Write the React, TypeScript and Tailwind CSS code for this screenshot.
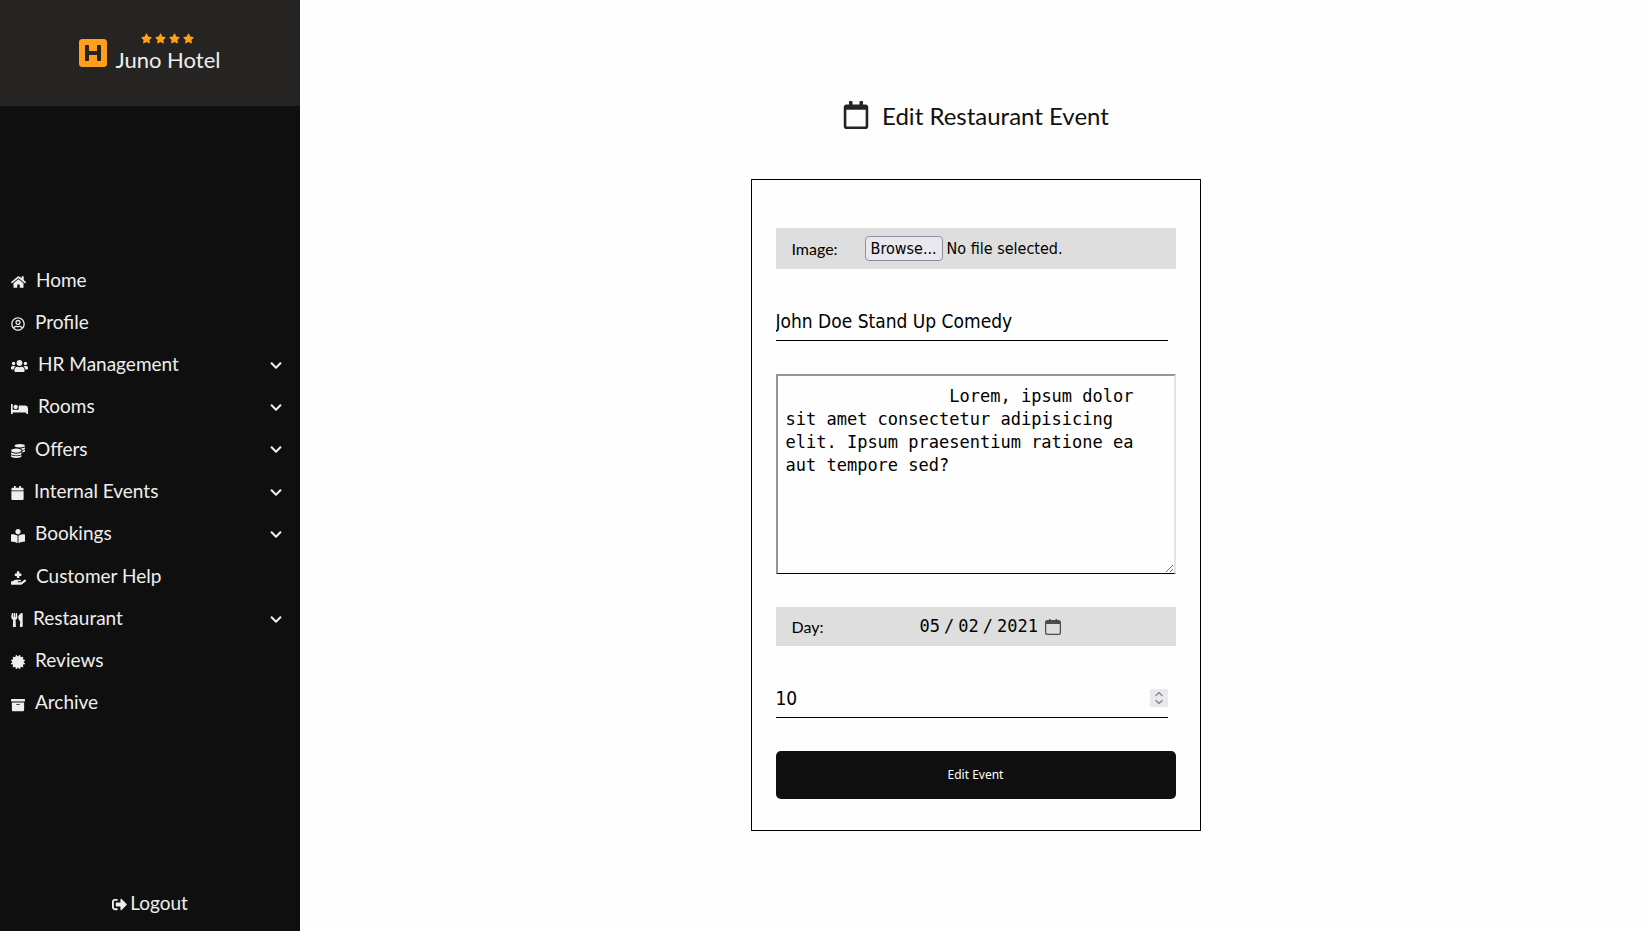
import type { ReactNode } from 'react';
import type { IconType } from 'react-icons';
import {
  FaArchive,
  FaBed,
  FaBookReader,
  FaCalendar,
  FaCertificate,
  FaChevronDown,
  FaCoins,
  FaHandHoldingMedical,
  FaHome,
  FaHSquare,
  FaRegCalendar,
  FaRegUserCircle,
  FaSignOutAlt,
  FaStar,
  FaUsers,
  FaUtensils,
} from 'react-icons/fa';

type NavItem = { label: string; icon: IconType; width: string; expandable?: boolean };

const navItems: NavItem[] = [
  { label: 'Home', icon: FaHome, width: 'w-[15px]' },
  { label: 'Profile', icon: FaRegUserCircle, width: 'w-[14px]' },
  { label: 'HR Management', icon: FaUsers, width: 'w-[17px]', expandable: true },
  { label: 'Rooms', icon: FaBed, width: 'w-[17px]', expandable: true },
  { label: 'Offers', icon: FaCoins, width: 'w-[14px]', expandable: true },
  { label: 'Internal Events', icon: FaCalendar, width: 'w-[13px]', expandable: true },
  { label: 'Bookings', icon: FaBookReader, width: 'w-[14px]', expandable: true },
  { label: 'Customer Help', icon: FaHandHoldingMedical, width: 'w-[15px]' },
  { label: 'Restaurant', icon: FaUtensils, width: 'w-[12px]', expandable: true },
  { label: 'Reviews', icon: FaCertificate, width: 'w-[14px]' },
  { label: 'Archive', icon: FaArchive, width: 'w-[14px]' },
];

function Sidebar() {
  return (
    <aside className="flex w-[300px] shrink-0 flex-col bg-[#0f0f0f] text-[#eeeeee]">
      <header className="flex h-[106px] items-center justify-center gap-2 bg-[#252422]">
        <FaHSquare className="h-8 w-7 text-[#ff9f1c]" />
        <div className="flex flex-col items-center pt-0.5">
          <div className="flex gap-[3px] text-[#ff9f1c]">
            {[1, 2, 3, 4].map((n) => (
              <FaStar key={n} className="size-[11px]" />
            ))}
          </div>
          <p className="text-[22px] leading-8">Juno Hotel</p>
        </div>
      </header>
      <nav className="flex flex-1 flex-col justify-center pb-3">
        <ul className="grid h-[465px] auto-rows-fr">
          {navItems.map(({ label, icon: Icon, width, expandable }) => (
            <li key={label}>
              <a href="#" className="flex h-full items-center pr-[18px] pl-[11px] text-[19px]">
                <Icon className={`mt-1 mr-[10px] h-[14px] shrink-0 ${width}`} />
                <span className="flex-1">{label}</span>
                {expandable && <FaChevronDown className="mt-0.5 h-[13px] w-3" />}
              </a>
            </li>
          ))}
        </ul>
      </nav>
      <a href="#" className="mb-[14px] flex items-center justify-center gap-[3px] text-[19px]">
        <FaSignOutAlt className="mt-1 size-[15px]" />
        Logout
      </a>
    </aside>
  );
}

function GreyRow({ children, className }: { children: ReactNode; className: string }) {
  return <div className={`flex items-center bg-[#dedede] pl-4 ${className}`}>{children}</div>;
}

function EventForm() {
  return (
    <form
      className="flex w-[450px] flex-col gap-[33px] border border-black px-6 pt-12 pb-[31px] font-['DejaVu_Sans_Condensed','DejaVu_Sans',sans-serif] text-black"
      onSubmit={(e) => e.preventDefault()}
    >
      <GreyRow className="h-[41px]">
        <span className="w-[73px] font-['Lato',sans-serif] text-base">Image:</span>
        <label className="relative flex items-center gap-1 text-base">
          <input type="file" aria-label="Image" className="sr-only" />
          <span className="rounded border border-[#8f8f9d] bg-[#e9e9ed] px-[5px] leading-[23px]">Browse...</span>
          <span>No file selected.</span>
        </label>
      </GreyRow>
      <input
        type="text"
        aria-label="Event name"
        defaultValue="John Doe Stand Up Comedy"
        className="mr-2 h-[39px] border-b border-black text-[19px] outline-none"
      />
      <textarea
        aria-label="Description"
        className="h-[200px] resize border-2 border-t-[#959595] border-r-[#e3e3e3] border-b border-b-black border-l-[#959595] px-2 py-[9px] font-['DejaVu_Sans_Mono',monospace] text-[17px] leading-[23px] outline-none"
        defaultValue={`${' '.repeat(16)}Lorem, ipsum dolor sit amet consectetur adipisicing elit. Ipsum praesentium ratione ea aut tempore sed?`}
      />
      <GreyRow className="h-[39px]">
        <label htmlFor="event-day" className="w-[127px] font-['Lato',sans-serif] text-base">
          Day:
        </label>
        <input
          id="event-day"
          type="date"
          defaultValue="2021-05-02"
          className="w-[123px] font-['DejaVu_Sans_Mono',monospace] text-[17px] outline-none [&::-webkit-calendar-picker-indicator]:hidden [&::-webkit-datetime-edit-text]:px-[3px]"
        />
        <svg viewBox="0 0 16 16" className="ml-[3px] size-4 text-[#4a4a4f]" fill="currentColor" aria-hidden="true">
          <path d="M13.500 1H12V.5a.75.75 0 0 0-1.500 0V1h-5V.5A.75.75 0 0 0 4 .5V1H2.500A2.500 2.500 0 0 0 0 3.500v10A2.500 2.500 0 0 0 2.500 16h11a2.500 2.500 0 0 0 2.500-2.500v-10A2.500 2.500 0 0 0 13.500 1zM14.750 13.500c0 .7-.6 1.250-1.250 1.250h-11c-.7 0-1.250-.6-1.250-1.250V5h13.500z" />
        </svg>
      </GreyRow>
      <div className="mr-2 flex h-[39px] items-center border-b border-black">
        <input
          type="number"
          aria-label="Places"
          defaultValue={10}
          className="min-w-0 flex-1 appearance-none text-[19px] outline-none [-moz-appearance:textfield] [&::-webkit-inner-spin-button]:appearance-none"
        />
        <svg viewBox="0 0 18 18" className="size-[18px] bg-[#e9e9ed]" fill="none" stroke="#8f8f9d" strokeWidth="1.600" strokeLinecap="round" strokeLinejoin="round" aria-hidden="true">
          <path d="M6 6.500 9 3.700l3 2.800M6 11.700l3 2.800 3-2.800" />
        </svg>
      </div>
      <button type="submit" className="h-12 rounded-[5px] bg-[#0f0f0f] font-['Noto_Sans',sans-serif] text-xs text-white">
        Edit Event
      </button>
    </form>
  );
}

export default function App() {
  return (
    <div className="flex min-h-screen bg-[#fefefe] font-['Lato',sans-serif]">
      <Sidebar />
      <main className="flex flex-1 flex-col items-center pt-[98px]">
        <h1 className="mb-[45px] flex items-center gap-3 text-2xl leading-9 text-[#0f0f0f]">
          <FaRegCalendar className="mb-0.5 h-7 w-auto text-[#252422]" />
          Edit Restaurant Event
        </h1>
        <EventForm />
      </main>
    </div>
  );
}
